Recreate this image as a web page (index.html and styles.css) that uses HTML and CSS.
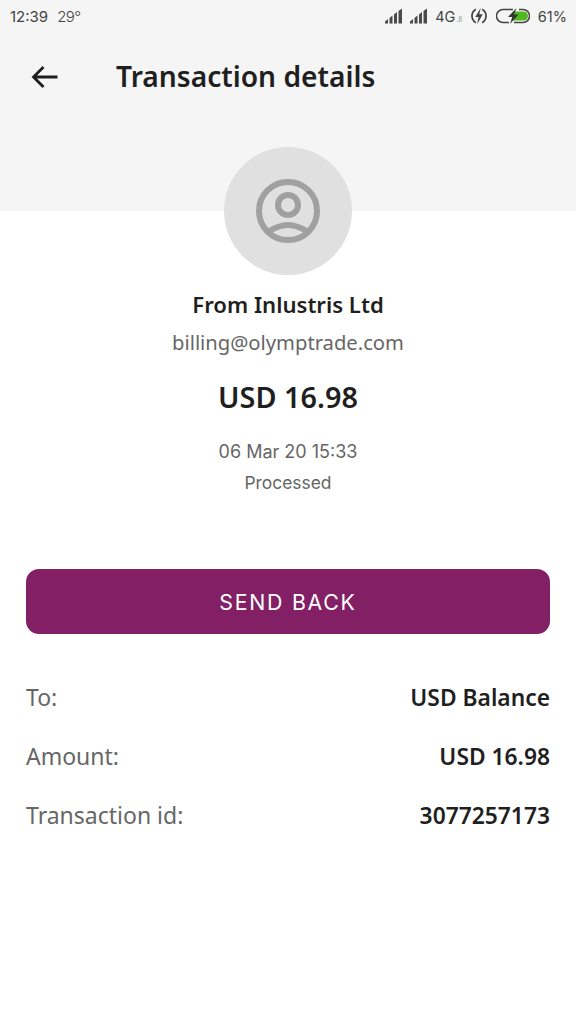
FILE: index.html
```html
<!DOCTYPE html>
<html lang="en">
<head>
<meta charset="utf-8">
<title>Transaction details</title>
<link rel="stylesheet" href="styles.css">
</head>
<body>
<div class="page">
  <header class="top">
    <div class="status">
      <div class="status-left"><span class="time">12:39</span><span class="temp">29°</span></div>
      <div class="status-right">
        <svg class="sig" viewBox="0 0 18 16"><path d="M0 15.500V13.500L3 11V15.500zM4.500 15.500V10L7.500 7.500V15.500zM9 15.500V6.500L12 4V15.500zM13.500 15.500V3L17 .5V15.500z" fill="#4a4a4a"/></svg>
        <svg class="sig sig-two" viewBox="0 0 18 16"><path d="M0 15.500V13.500L3 11V15.500zM4.500 15.500V10L7.500 7.500V15.500zM9 15.500V6.500L12 4V15.500zM13.500 15.500V3L17 .5V15.500z" fill="#4a4a4a"/></svg>
        <span class="net">4G<small>.ll</small></span>
        <svg class="bolt" viewBox="0 0 18 18"><path d="M5.800 2.300A7.800 7.800 0 0 0 5.800 15.700M12.200 2.300A7.800 7.800 0 0 1 12.200 15.700" fill="none" stroke="#444" stroke-width="1.700"/><path d="M10.800 .8 5.300 10h3.200l-1.300 7.200 5.500-10H9.300z" fill="#444"/></svg>
        <svg class="batt" viewBox="0 0 34 16"><path d="M17 1.500H7a6.500 6.500 0 0 0 0 13h6M23 1.500h4a6.500 6.500 0 0 1 0 13h-9" fill="none" stroke="#444" stroke-width="1.500"/><path d="M18 3.500h9.500a4.500 4.500 0 0 1 0 9H15z" fill="#4fb81f"/><path d="M20.500 0 12 9h4.500l-2.500 7 8.500-9.500h-4.500z" fill="#333"/></svg>
        <span class="pct">61%</span>
      </div>
    </div>
    <div class="bar">
      <svg class="back" viewBox="0 0 28 24"><path d="M26.500 12H3M12.500 2 2.500 12l10 10" fill="none" stroke="#1e1e1e" stroke-width="2.800"/></svg>
      <h1 class="title">Transaction details</h1>
    </div>
  </header>
  <main class="content">
    <div class="avatar">
      <svg viewBox="0 0 64 64" class="avatar-icon"><circle cx="32" cy="32" r="29" fill="none" stroke="#a0a0a0" stroke-width="6"/><circle cx="32" cy="26" r="10" fill="none" stroke="#a0a0a0" stroke-width="6"/><path d="M12 53C18 49 25 46 32 46s14 3 20 7" fill="none" stroke="#a0a0a0" stroke-width="6"/></svg>
    </div>
    <div class="from">From Inlustris Ltd</div>
    <div class="email">billing@olymptrade.com</div>
    <div class="amount">USD 16.98</div>
    <div class="date">06 Mar 20 15:33</div>
    <div class="state">Processed</div>
    <button class="send">SEND BACK</button>
    <dl class="rows">
      <div class="row"><dt>To:</dt><dd>USD Balance</dd></div>
      <div class="row"><dt>Amount:</dt><dd>USD 16.98</dd></div>
      <div class="row"><dt>Transaction id:</dt><dd>3077257173</dd></div>
    </dl>
  </main>
</div>
</body>
</html>
```
FILE: styles.css
```css
* { box-sizing: border-box; }
html, body { margin: 0; padding: 0; background: #fff; }
body { font-family: "Noto Sans", "Open Sans", sans-serif; color: #1f1f1f; }
.page { width: 576px; height: 1024px; overflow: hidden; }
.top { background: #f5f5f5; height: 211px; }
.status { height: 32px; display: flex; justify-content: space-between; align-items: center; padding: 0 9px 0 10px; font-family: Inter, sans-serif; color: #444; font-size: 15px; }
.status-left { display: flex; gap: 9px; align-items: center; }
.temp { font-weight: 300; letter-spacing: -0.5px; }
.status-right { display: flex; align-items: center; }
.sig { width: 18px; height: 16px; margin-right: 7px; }
.sig-two { margin-right: 7px; }
.net { font-size: 14.500px; margin-right: 8px; }
.net small { font-size: 7px; color: #888; margin-left: 1px; }
.bolt { width: 18px; height: 18px; margin-right: 8px; }
.batt { width: 34px; height: 16px; margin-right: 8px; }
.pct { font-size: 14.500px; }
.bar { display: flex; align-items: center; height: 60px; padding-left: 31px; margin-top: 15px; }
.back { width: 28px; height: 24px; flex: none; }
.title { margin: -2px 0 0 57px; font-size: 28.200px; font-weight: 600; line-height: 60px; color: #1f1f1f; }
.content { display: flex; flex-direction: column; align-items: center; padding: 0 26px; }
.avatar { width: 128px; height: 128px; border-radius: 50%; background: #e0e0e0; margin-top: -64px; display: flex; align-items: center; justify-content: center; }
.avatar-icon { width: 64px; height: 64px; }
.from { font-size: 22.100px; font-weight: 600; line-height: 30px; margin-top: 14px; }
.email { font-size: 20.200px; line-height: 28px; color: #666; margin-top: 9px; }
.amount { font-size: 28.800px; font-weight: 600; line-height: 36px; margin-top: 23px; }
.date { font-family: Inter, sans-serif; font-size: 18px; line-height: 24px; color: #666; margin-top: 25px; }
.state { font-family: Inter, sans-serif; font-size: 17.400px; line-height: 24px; color: #666; margin-top: 7px; }
.send { width: 100%; height: 65px; margin-top: 74px; padding-top: 2px; background: #831f65; color: #fff; border: 0; border-radius: 13px; font-family: Inter, sans-serif; font-size: 21.300px; letter-spacing: 1.750px; }
.rows { width: 100%; margin: 34px 0 0; }
.row { display: flex; justify-content: space-between; align-items: center; height: 59px; font-size: 23px; line-height: 59px; }
.row dt { color: #666; }
.row dd { margin: 0; font-weight: 600; color: #1f1f1f; font-size: 22.800px; }
```
